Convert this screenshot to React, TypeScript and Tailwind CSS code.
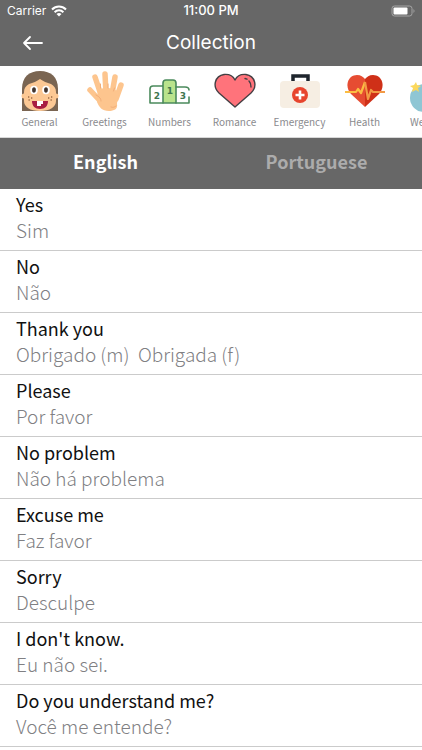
import { useState } from 'react'

const categories = [
  { name: 'General', icon: <FaceIcon /> },
  { name: 'Greetings', icon: <HandIcon /> },
  { name: 'Numbers', icon: <PodiumIcon /> },
  { name: 'Romance', icon: <HeartIcon /> },
  { name: 'Emergency', icon: <KitIcon /> },
  { name: 'Health', icon: <PulseIcon /> },
  { name: 'Weather', icon: <WeatherIcon /> },
]

const phrases = [
  ['Yes', 'Sim'],
  ['No', 'Não'],
  ['Thank you', 'Obrigado (m)\u00a0 Obrigada (f)'],
  ['Please', 'Por favor'],
  ['No problem', 'Não há problema'],
  ['Excuse me', 'Faz favor'],
  ['Sorry', 'Desculpe'],
  ["I don't know.", 'Eu não sei.'],
  ['Do you understand me?', 'Você me entende?'],
]

function FaceIcon() {
  return (
    <svg width="40" height="42" viewBox="0 0 40 42">
      <path d="M2 41V19C2 7 9 1 20 1s18 6 18 18v22z" fill="#7a6552" />
      <path d="M4 22c0-4 2-6 5-8 4-1 8-3 11-5 3 2 7 4 11 5 3 2 5 4 5 8v9c0 6-6 10-16 10S4 37 4 31z" fill="#fcc894" />
      <circle cx="4" cy="26" r="2.5" fill="#fcc894" />
      <circle cx="36" cy="26" r="2.5" fill="#fcc894" />
      <ellipse cx="14" cy="20" rx="3.8" ry="4.2" fill="#fff" />
      <ellipse cx="26" cy="20" rx="3.8" ry="4.2" fill="#fff" />
      <ellipse cx="14" cy="20" rx="1.9" ry="2.8" fill="#42352f" />
      <ellipse cx="26" cy="20" rx="1.9" ry="2.8" fill="#42352f" />
      <path d="M8 27h1.300M11 28h1.300M8.500 30h1.300M31 27h1.300M28 28h1.300M30.500 30h1.300" stroke="#9c6a45" strokeWidth="1.3" />
      <path d="M12 31h16c0 5-3 8-8 8s-8-3-8-8z" fill="#a81e42" />
      <path d="M17 31h6v3h-2v2h-4z" fill="#fff" />
    </svg>
  )
}

function HandIcon() {
  return (
    <svg width="40" height="42" viewBox="0 0 40 42">
      <g stroke="#fdc58e" strokeWidth="5.500" strokeLinecap="round" fill="none">
        <path d="M16 25L10 7M21 24L20 4M27 24L30 7M31 29L36 15M18 34L5 20" />
      </g>
      <path d="M13 20c5-3 16-3 21 3-1 5-2 8-2 11 1 5-3 7-8 7-7 0-10-4-12-9z" fill="#fdc58e" />
      <path d="M15.500 14v4M23 14v4M29.500 18l-1 3M11 25c4 2 5 4 5 6M26 37c2 1 4 0 5-1" stroke="#f2ad78" strokeWidth="1" fill="none" strokeLinecap="round" />
    </svg>
  )
}

function PodiumIcon() {
  return (
    <svg width="42" height="42" viewBox="0 0 42 42">
      <g stroke="#4b8a5c" strokeWidth="1.6" fill="none" strokeLinejoin="round" strokeLinecap="round">
        <path d="M14 33H1V19q0-3 3-3h10" />
        <path d="M14 33V13q0-3 3-3h7q3 0 3 3v20z" fill="#b9e38c" />
        <path d="M27 17h9q4 0 4 3M27 33h13v-6" />
      </g>
      <g fill="#3f7650" fontFamily="DejaVu Sans, sans-serif" fontWeight="700" fontSize="9" textAnchor="middle">
        <text x="8" y="29">2</text>
        <text x="21" y="24">1</text>
        <text x="34" y="29">3</text>
      </g>
    </svg>
  )
}

function HeartIcon() {
  return (
    <svg width="42" height="42" viewBox="0 0 42 42">
      <path d="M21 37L5 23C-2 16 1 6 10 4.500c5-.5 9 1.500 11 5.500 2-4 6-6 11-5.500 9 1.500 12 11.500 5 18.500z" fill="#ff737b" stroke="#443f43" strokeWidth="1.4" strokeLinejoin="round" />
      <path d="M31 8.500l2 .7M35 11c2 2 2 4 2 6" stroke="#443f43" strokeWidth="1.4" strokeLinecap="round" fill="none" />
    </svg>
  )
}

function KitIcon() {
  return (
    <svg width="42" height="42" viewBox="0 0 42 42">
      <path d="M14 12V6h15v6" fill="none" stroke="#1e252d" strokeWidth="3.500" />
      <rect x="1" y="11" width="40" height="27" rx="4" fill="#f6eee3" />
      <circle cx="21" cy="25" r="8" fill="#e7452e" />
      <path d="M21 20.500v9M16.500 25h9" stroke="#fff" strokeWidth="2.600" />
    </svg>
  )
}

function PulseIcon() {
  return (
    <svg width="42" height="42" viewBox="0 0 42 42">
      <path d="M21 37L7 24C0 16 4 5 13 5c4 0 6 2 8 4z" fill="#e64c32" />
      <path d="M21 37l14-13c7-8 3-19-6-19-4 0-6 2-8 4z" fill="#cf3018" />
      <path d="M1 22h11l2-3 3 4 4-11" fill="none" stroke="#fbbd42" strokeWidth="2.200" strokeLinejoin="round" />
      <path d="M21 12l3 17 3-9 2 2h12" fill="none" stroke="#f29a45" strokeWidth="2.200" strokeLinejoin="round" />
    </svg>
  )
}

function WeatherIcon() {
  return (
    <svg width="42" height="42" viewBox="0 0 42 42">
      <circle cx="15" cy="28" r="14" fill="#8fc6d4" />
      <path d="M7 12l1 3 4 1-3 2 1 4-3-2-4 2 1-4-3-2 4-1z" fill="#fbd85c" />
    </svg>
  )
}

function StatusBar() {
  return (
    <div className="grid grid-cols-3 items-center h-[22px] px-[7px] font-['Inter',sans-serif] text-[12px]">
      <div className="flex items-center gap-[5px]">
        <span>Carrier</span>
        <svg width="16" height="12" viewBox="0 0 16 12" fill="none" stroke="#fff" strokeWidth="2">
          <path d="M1 4.500c4-4 10-4 14 0M3.600 7.200c2.500-2.500 6.300-2.500 8.800 0" />
          <path d="M5.500 9q2.500-2 5 0L8 11.500z" fill="#fff" stroke="none" />
        </svg>
      </div>
      <span className="text-center text-[13px] font-medium">11:00 PM</span>
      <svg className="justify-self-end" width="26" height="12" viewBox="0 0 26 12">
        <rect x="3" y="1" width="20" height="10" rx="2.500" fill="none" stroke="#a5a5a5" />
        <rect x="4.500" y="2.500" width="14" height="7" rx="1" fill="#fff" />
        <path d="M24.500 4q2 2 0 4z" fill="#a5a5a5" />
      </svg>
    </div>
  )
}

function App() {
  const [lang, setLang] = useState('English')

  return (
    <div className="min-h-screen bg-white font-['Noto_Sans_CJK_KR',sans-serif]">
      <header className="bg-[#676767] text-white">
        <StatusBar />
        <div className="grid grid-cols-[1fr_auto_1fr] items-center h-11 px-5 pb-[2px]">
          <button aria-label="Back" className="flex items-center justify-self-start size-6">
            <svg className="shrink-0" width="24" height="20" viewBox="0 0 24 20" fill="none" stroke="#fff" strokeWidth="1.8" strokeLinecap="round" strokeLinejoin="round">
              <path d="M22 10H4M10 4l-6 6 6 6" />
            </svg>
          </button>
          <h1 className="font-['Inter',sans-serif] text-[19px]">Collection</h1>
        </div>
      </header>

      {/* Categories */}
      <nav className="flex overflow-x-auto [scrollbar-width:none] h-[72px] pl-[7px] pt-1 border-b border-[#d8d8d8]">
        {categories.map((c) => (
          <button key={c.name} className="flex flex-col items-center shrink-0 w-[65px]">
            {c.icon}
            <span className="text-[10px] leading-[20px] text-[#8a8a8e]">{c.name}</span>
          </button>
        ))}
      </nav>

      {/* Language tabs */}
      <div className="grid grid-cols-2 h-[51px] bg-[#676767]">
        {['English', 'Portuguese'].map((l) => (
          <button
            key={l}
            onClick={() => setLang(l)}
            className={`pb-1 text-[18px] font-bold ${lang === l ? 'text-white' : 'text-[#acacac]'}`}
          >
            {l}
          </button>
        ))}
      </div>

      <ul>
        {phrases.map(([en, pt]) => (
          <li key={en} className="h-[62px] px-4 pt-[2px] border-b border-[#cbcbcb] leading-[26px]">
            <p className="text-[18px] text-[#111111]">{en}</p>
            <p className="text-[19px] font-light text-[#808083]">{pt}</p>
          </li>
        ))}
      </ul>
    </div>
  )
}

export default App
